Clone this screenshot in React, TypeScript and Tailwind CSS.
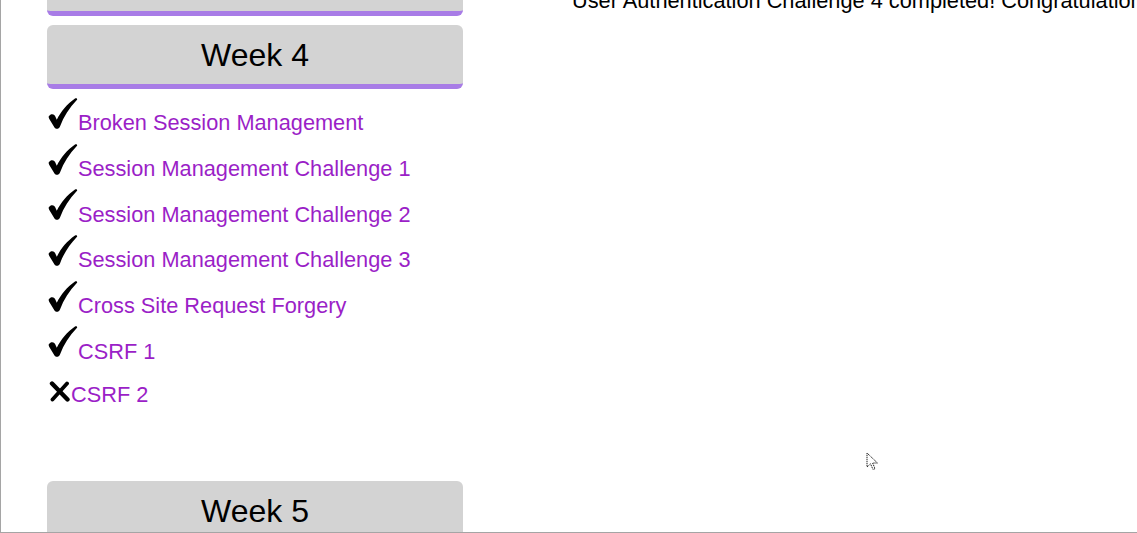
import React from "react";

const items: { label: string; done: boolean }[] = [
  { label: "Broken Session Management", done: true },
  { label: "Session Management Challenge 1", done: true },
  { label: "Session Management Challenge 2", done: true },
  { label: "Session Management Challenge 3", done: true },
  { label: "Cross Site Request Forgery", done: true },
  { label: "CSRF 1", done: true },
  { label: "CSRF 2", done: false },
];

function Check() {
  return (
    <svg width="30" height="32" viewBox="0 0 30 32" className="shrink-0">
      <path
        d="M0.8,18.2 C2.6,15.4 6.2,15.6 7.2,18.2 L8.8,21.8 C12.6,13.6 19,6 27,0.4 C28.6,-0.4 29.8,1 28.8,2 C21.4,9.8 15.6,18.6 12,28.4 C11,31.4 7.2,31.6 6.2,29 L1.6,21.6 C0.9,20.4 0.4,19.2 0.8,18.2 Z"
        fill="#000"
      />
    </svg>
  );
}

function Cross() {
  return (
    <svg width="22" height="21" viewBox="0 0 22 21" className="shrink-0">
      <path d="M3,2.5 L18.5,18.5" stroke="#000" strokeWidth="4.4" strokeLinecap="round" />
      <path d="M18,2.5 L3.5,18.5" stroke="#000" strokeWidth="3.8" strokeLinecap="round" />
    </svg>
  );
}

function WeekBox({ title, className = "" }: { title: string; className?: string }) {
  return (
    <div
      className={
        "h-[64px] w-[416px] rounded-[6px] bg-[#d3d3d3] border-b-[5px] border-[#a87ce6] flex items-center justify-center text-[32px] leading-[36px] text-black " +
        className
      }
    >
      <span className="mt-[1px]">{title}</span>
    </div>
  );
}

export default function App() {
  return (
    <div
      className="relative w-[1137px] h-[533px] overflow-hidden bg-white border-l border-b border-[#a5a5a5] flex"
      style={{ fontFamily: '"Liberation Sans", Arial, sans-serif' }}
    >
      {/* Sidebar */}
      <div className="ml-[46px] w-[416px] flex flex-col shrink-0">
        <div className="mt-[-48px]">
          <WeekBox title="Week 3" />
        </div>
        <div className="mt-[9px]">
          <WeekBox title="Week 4" />
        </div>
        <div className="mt-[9px] flex flex-col">
          {items.map((it) =>
            it.done ? (
              <div key={it.label} className="h-[45.7px] flex items-start">
                <div className="ml-[1px]">
                  <Check />
                </div>
                <a className="mt-[12.4px] text-[21.75px] leading-[25px] text-[#9b1fc7] whitespace-nowrap">
                  {it.label}
                </a>
              </div>
            ) : (
              <div key={it.label} className="h-[45px] flex items-start">
                <div className="ml-[2px] mt-[9px]">
                  <Cross />
                </div>
                <a className="mt-[9.4px] text-[21.75px] leading-[25px] text-[#9b1fc7] whitespace-nowrap">
                  {it.label}
                </a>
              </div>
            )
          )}
        </div>
        <div className="mt-[64px]">
          <WeekBox title="Week 5" />
        </div>
      </div>

      {/* Main content */}
      <div className="ml-[109px] flex-1 min-w-0">
        <p className="mt-[-11.6px] text-[21.75px] leading-[25px] text-black whitespace-nowrap">
          User Authentication Challenge 4 completed! Congratulations
        </p>
      </div>

      {/* Mouse cursor */}
      <svg
        className="absolute left-[865px] top-[452px]"
        width="14"
        height="20"
        viewBox="0 0 14 20"
      >
        <path
          d="M1,1 L1,15 L4.5,11.8 L7,17.5 L9,16.6 L6.6,11 L11.5,11 Z"
          fill="#fff"
          stroke="#222"
          strokeWidth="1"
          strokeDasharray="1.3 0.7"
        />
      </svg>
    </div>
  );
}
